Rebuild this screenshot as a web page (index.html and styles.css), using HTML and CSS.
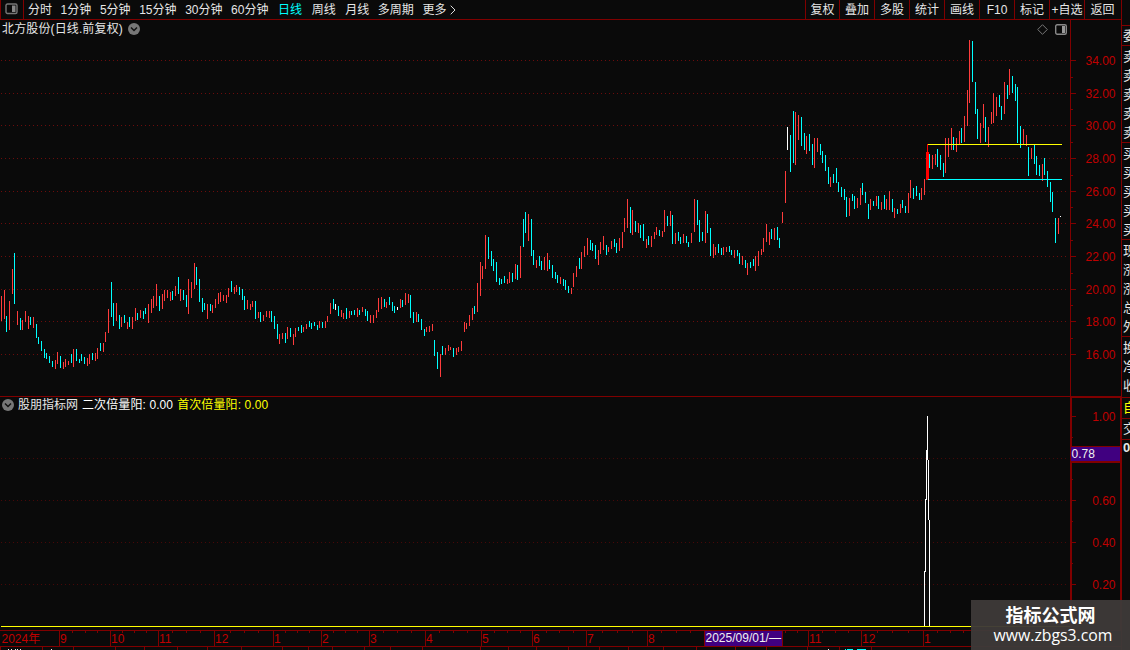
FILE: index.html
```html
<!DOCTYPE html>
<html lang="zh-CN">
<head>
  <meta charset="UTF-8">
  <title>北方股份</title>
  <link rel="stylesheet" href="styles.css">
</head>
<body>
  <div class="terminal">
    <div class="main">
      <div class="toolbar">
        <div class="layout-toggle">
          <svg width="13" height="12" viewBox="0 0 13 12"><rect x="1" y="1" width="11" height="9.5" rx="1.5" fill="none" stroke="#777" stroke-width="1.4"/><rect x="7" y="2.5" width="3.5" height="6.5" fill="#888"/></svg>
        </div>
        <div class="periods">
          <span>分时</span>
          <span>1分钟</span>
          <span>5分钟</span>
          <span>15分钟</span>
          <span>30分钟</span>
          <span>60分钟</span>
          <span class="spaced active">日线</span>
          <span class="spaced">周线</span>
          <span class="spaced">月线</span>
          <span>多周期</span>
          <span class="more">更多<svg width="6" height="10" viewBox="0 0 6 10"><path d="M.7 .7L5 5L.7 9.300" fill="none" stroke="#ddd"/></svg></span>
        </div>
        <div class="tools">
          <span>复权</span>
          <span>叠加</span>
          <span>多股</span>
          <span>统计</span>
          <span>画线</span>
          <span>F10</span>
          <span>标记</span>
          <span>+自选</span>
          <span>返回</span>
        </div>
      </div>

      <!-- Price chart -->
      <div class="panel price">
        <div class="panel-title">
          <span class="stock">北方股份(日线.前复权)</span>
          <svg width="12" height="12" viewBox="0 0 12 12"><circle cx="6" cy="6" r="6" fill="#777"/><path d="M3 4.500L6 7.500L9 4.500" fill="none" stroke="#111" stroke-width="1.500"/></svg>
        </div>
        <div class="panel-tools">
          <svg width="11" height="11" viewBox="0 0 11 11"><path d="M5.500 .7L10.300 5.500L5.500 10.300L.7 5.500Z" fill="none" stroke="#777"/></svg>
          <svg width="12" height="11" viewBox="0 0 12 11"><rect x=".7" y=".7" width="10.600" height="9.600" rx="1.500" fill="none" stroke="#888" stroke-width="1.400"/><rect x="7" y="2" width="3" height="7" fill="#999"/></svg>
        </div>
        <svg class="chart" width="1121" height="376" viewBox="0 20 1121 376">
          <path class="grid" d="M1 60.500H1068M1 93.500H1068M1 125.500H1068M1 158.500H1068M1 191.500H1068M1 223.500H1068M1 256.500H1068M1 289.500H1068M1 321.500H1068M1 354.500H1068"/>
          <g transform="translate(.5 0)">
            <path class="up" d="M1 296V321M4 290V319M9 301V330M12 269V294M17 311V325M22 320V330M25 311V322M28 316V329M33 317V328M55 360V369M57 352V364M63 362V369M65 359V367M68 361V365M73 349V367M87 358V366M89 354V364M95 353V361M97 348V359M103 343V352M105 332V342M108 309V333M116 303V321M121 317V327M127 322V329M132 317V329M135 308V321M140 310V318M148 304V323M151 299V313M153 296V308M156 284V306M162 294V309M164 290V301M167 290V298M170 292V301M175 286V296M180 289V301M188 279V314M191 282V298M194 263V289M207 304V319M212 305V313M215 299V308M218 293V304M220 292V302M223 295V301M226 295V303M228 288V297M234 287V294M236 285V292M247 300V309M250 304V310M252 301V307M258 312V318M263 315V321M266 311V317M269 311V318
            M279 334V344M282 333V339M287 327V339M293 334V345M295 328V337M303 327V332M306 324V329M319 321V328M325 321V328M327 316V322M330 303V314M341 310V317M343 313V319M349 311V318M357 308V317M362 307V312M370 315V323M373 315V323M376 310V318M378 298V312M381 297V309M386 302V308M400 299V308M405 293V305M408 294V303M416 312V322M426 327V332M429 326V332M432 324V331M440 354V377M445 348V355M448 345V351M450 347V350M456 348V355M458 347V352M461 341V351M464 322V332M466 323V329M469 315V326M472 308V320M477 283V312M480 262V296M482 266V279M485 235V269M507 279V284M509 272V283M515 264V279M520 246V278M528 214V241
            M536 260V268M544 257V270M547 253V271M560 277V284M571 288V294M573 273V287M576 266V277M581 252V269M584 246V257M587 238V255M598 250V265M600 242V254M603 236V250M608 247V252M611 241V249M619 238V251M622 232V248M624 218V232M627 199V228M632 210V235M638 223V233M646 239V248M651 236V247M654 232V239M656 227V235M662 231V237M664 210V232M670 211V226M675 233V244M683 234V243M691 233V243M694 199V232M705 211V243M713 244V258M715 247V255M723 247V255M726 247V252M734 250V258M742 256V265M747 263V275M755 256V271M758 251V266M761 249V255M763 238V252M766 224V242M769 232V245M774 228V240M782 212V223M785 171V203
            M795 112V165M798 115V140M806 136V154M814 138V168M817 138V152M830 177V187M849 198V216M857 198V208M860 188V205M870 199V210M876 196V206M881 202V210M886 199V210M889 191V210M894 208V218M900 204V213M908 193V213M910 180V198M921 188V200M924 179V195M932 155V169M935 154V165M945 138V173M948 138V157M951 128V150M956 138V152M959 131V144M964 116V142M967 90V126M969 40V103M980 123V143M983 104V128M988 127V147M991 112V124M993 93V123M996 97V116M1004 82V114M1009 69V95M1023 129V144M1026 135V146M1031 148V159M1042 164V181M1058 218V234"/>
            <path class="down" d="M6 316V332M14 253V304M20 318V330M30 317V325M36 324V338M38 337V344M41 341V351M44 349V358M46 353V359M49 356V363M52 361V367M60 356V368M71 354V363M76 349V361M79 359V363M81 354V361M84 357V364M92 353V360M100 343V351M111 282V317M113 303V326M119 315V329M124 315V323M129 317V327M137 313V320M143 311V319M145 308V314M159 296V311M172 291V300M178 277V294M183 290V300M186 295V307M196 267V285M199 279V302M202 298V312M204 303V310M210 304V311M231 281V292M239 287V295M242 289V300M244 296V310M255 301V319M260 312V322
            M271 311V322M274 316V329M277 324V339M285 333V343M290 328V337M298 327V331M301 325V333M309 321V327M311 323V329M314 322V326M317 325V330M322 322V328M333 299V309M338 306V316M346 308V319M351 311V315M354 310V315M359 310V315M365 309V316M367 311V321M384 299V307M389 297V305M392 302V311M394 306V313M402 300V307M410 295V318M413 312V323M418 314V322M421 319V330M424 329V336M434 340V356M437 352V369M442 346V355M453 348V357M474 306V314M488 237V259M491 251V266M493 259V271M496 262V282M499 278V285M501 279V284M504 276V283M512 273V282M517 265V280M523 219V247M525 212V233
            M531 219V256M533 250V265M539 256V266M541 261V270M549 260V269M552 265V278M555 272V279M557 275V283M563 279V286M565 280V290M568 286V293M579 258V269M590 240V250M592 243V251M595 245V259M606 245V255M614 239V247M616 243V253M630 207V233M635 221V232M640 225V238M643 224V241M648 236V245M659 230V236M667 216V226M672 215V244M678 232V241M680 237V244M686 236V243M688 242V247M697 200V225M699 220V242M702 232V241M707 214V233M710 228V256M718 244V253M721 248V255M729 246V252M731 250V255M737 250V256M739 253V264M745 260V268M750 262V268M753 259V266M771 229V239M777 227V240M779 238V248
            M790 135V172M793 111V163M801 117V146M804 133V150M809 134V151M812 144V165M820 144V155M822 151V163M825 155V171M828 167V184M833 174V183M836 168V183M838 182V192M841 187V197M844 189V200M846 197V217M852 194V201M854 196V209M862 183V195M865 192V203M868 204V219M873 201V206M878 196V209M884 195V209M892 199V212M897 209V214M902 200V208M905 206V213M913 188V199M916 186V196M919 193V200M929 154V168M937 149V167M940 155V170M943 163V177M953 137V150M961 128V143M972 41V82M975 82V114M977 109V139M985 117V142M999 95V107M1001 106V120M1007 85V99M1012 76V93M1015 84V101M1017 87V143M1020 126V148M1028 147V176M1034 145V164M1036 156V175M1039 165V176M1044 158V175M1047 171V187M1050 182V202M1052 192V212M1055 218V243"/>
            <path class="flat" d="M335 304V310M397 307V310M787 127V150M1060 216V217"/>
          </g>
          <!-- Signal bar with its high and low -->
          <path d="M927 144h1v8h1v28h-3v-28h1z" fill="#f00"/>
          <path d="M928 144.500H1062" stroke="#ff0"/>
          <path d="M928 179.500H1062" stroke="#0ff"/>
          <path class="frame" d="M1070.500 20V396M1071 60.500H1076M1071 93.500H1076M1071 125.500H1076M1071 158.500H1076M1071 191.500H1076M1071 223.500H1076M1071 256.500H1076M1071 289.500H1076M1071 321.500H1076M1071 354.500H1076M1071 77.500H1073M1071 109.500H1073M1071 142.500H1073M1071 175.500H1073M1071 207.500H1073M1071 240.500H1073M1071 273.500H1073M1071 305.500H1073M1071 338.500H1073"/>
          <g class="scale">
            <text x="1115.500" y="65">34.00</text>
            <text x="1115.500" y="98">32.00</text>
            <text x="1115.500" y="130">30.00</text>
            <text x="1115.500" y="163">28.00</text>
            <text x="1115.500" y="196">26.00</text>
            <text x="1115.500" y="228">24.00</text>
            <text x="1115.500" y="261">22.00</text>
            <text x="1115.500" y="294">20.00</text>
            <text x="1115.500" y="326">18.00</text>
            <text x="1115.500" y="359">16.00</text>
          </g>
        </svg>
      </div>

      <!-- Indicator chart -->
      <div class="panel indicator">
        <div class="panel-title">
          <svg width="12" height="12" viewBox="0 0 12 12"><circle cx="6" cy="6" r="6" fill="#777"/><path d="M3 4.500L6 7.500L9 4.500" fill="none" stroke="#111" stroke-width="1.500"/></svg>
          <span>股朋指标网</span>
          <span class="second">二次倍量阳: 0.00</span>
          <span class="first">首次倍量阳: 0.00</span>
        </div>
        <svg class="chart" width="1121" height="233" viewBox="0 397 1121 233">
          <path class="grid faint" d="M1 458.500H1068M1 500.500H1068M1 542.500H1068M1 584.500H1068"/>
          <path d="M1 626.500H1070" stroke="#ff0"/>
          <path d="M924.500 626V572L925.500 571V500L926.500 499V451L927.500 450V416V450L928.500 469V498L929.500 541V626" fill="none" stroke="#fff"/>
          <path d="M1070 397H1072V630H1070zM1070 397H1121V398H1070zM1120 397H1121V630H1120z" fill="#800000"/>
          <path class="frame" d="M1072 416.500H1076M1072 500.500H1076M1072 542.500H1076M1072 584.500H1076M1072 437.500H1073M1072 479.500H1073M1072 521.500H1073M1072 563.500H1073"/>
          <rect x="1071" y="446" width="50" height="17" fill="#800000"/>
          <rect x="1071" y="447" width="49" height="14" fill="#400080"/>
          <text class="cursor-label" x="1071.500" y="458">0.78</text>
          <g class="scale">
            <text x="1115.500" y="421">1.00</text>
            <text x="1115.500" y="505">0.60</text>
            <text x="1115.500" y="547">0.40</text>
            <text x="1115.500" y="589">0.20</text>
          </g>
        </svg>
      </div>

      <!-- Date axis -->
      <svg class="chart" width="1121" height="20" viewBox="0 630 1121 20">
        <path class="frame" d="M0 630.500H1121M0 646.500H1121M59.500 630V646M110.500 630V646M158.500 630V646M214.500 630V646M273.500 630V646M321.500 630V646M369.500 630V646M425.500 630V646M481.500 630V646M532.500 630V646M586.500 630V646M647.500 630V646M808.500 630V646M861.500 630V646M923.500 630V646"/>
        <path class="frame" d="M72.500 630v3M85.500 630v3M97.500 630v3M122.500 630v3M134.500 630v3M146.500 630v3M172.500 630v3M186.500 630v3M200.500 630v3M230.500 630v3M244.500 630v3M258.500 630v3M285.500 630v3M297.500 630v3M309.500 630v3M333.500 630v3M345.500 630v3M357.500 630v3M383.500 630v3M397.500 630v3M411.500 630v3M439.500 630v3M453.500 630v3M467.500 630v3M494.500 630v3M507.500 630v3M520.500 630v3M546.500 630v3M559.500 630v3M573.500 630v3M602.500 630v3M617.500 630v3M632.500 630v3M661.500 630v3M676.500 630v3M690.500 630v3M785.500 630v3M797.500 630v3M822.500 630v3M835.500 630v3M848.500 630v3M877.500 630v3M892.500 630v3M908.500 630v3M937.500 630v3M950.500 630v3M963.500 630v3"/>
        <path class="frame" d="M.5 647v3M42.500 647v3M73.500 647v3M115.500 647v3M144.500 647v3M177.500 647v3M207.500 647v3M241.500 647v3M282.500 647v3M308.500 647v3M332.500 647v3M364.500 647v3M390.500 647v3M422.500 647v3M480.500 647v3M508.500 647v3M536.500 647v3M568.500 647v3M599.500 647v3M628.500 647v3M663.500 647v3M696.500 647v3M735.500 647v3M766.500 647v3M807.500 647v3M839.500 647v3M871.500 647v3"/>
        <path d="M8 649.500h1M11 649.500h1M15 649.500h1M17 649.500h1M20 649.500h1M51 649.500h1M828 649.500h1" stroke="#eee"/>
        <path d="M845 649.500h1M847 649.500h6M857 649.500h9" stroke="#0ff"/>
        <rect x="704.500" y="630.500" width="78" height="16" fill="#400080" stroke="#800000"/>
        <g class="dates">
          <text x="1.500" y="643">2024年</text>
          <text x="60" y="643">9</text>
          <text x="111" y="643">10</text>
          <text x="159" y="643">11</text>
          <text x="215" y="643">12</text>
          <text x="274" y="643">1</text>
          <text x="322" y="643">2</text>
          <text x="370" y="643">3</text>
          <text x="426" y="643">4</text>
          <text x="482" y="643">5</text>
          <text x="533" y="643">6</text>
          <text x="587" y="643">7</text>
          <text x="648" y="643">8</text>
          <text x="809" y="643">11</text>
          <text x="862" y="643">12</text>
          <text x="924" y="643">1</text>
        </g>
        <text class="cursor-label" x="705.500" y="642">2025/09/01/—</text>
      </svg>
    </div>

    <!-- Quote column, cut off by the window edge -->
    <div class="quotes">
      <div class="group head"><span>委</span></div>
      <div class="group"><span>卖</span><span>卖</span><span>卖</span><span>卖</span><span>卖</span></div>
      <div class="group"><span>买</span><span>买</span><span>买</span><span>买</span><span>买</span></div>
      <div class="group"><span>现</span><span>涨</span><span>涨</span><span>总</span><span>外</span></div>
      <div class="group short"><span>换</span><span>净</span><span>收</span></div>
      <div class="group single own"><span>自</span></div>
      <div class="group single"><span>交</span></div>
      <div class="group last"><b>0</b></div>
    </div>

    <div class="watermark">
      <div class="site-name">指标公式网</div>
      <div class="site-url">www.zbgs3.com</div>
    </div>
  </div>
</body>
</html>
```

FILE: styles.css
```css
body {
  margin: 0;
  overflow: hidden;
  background-color: #0a0a0a;
  color: #e6e6e6;
  font: 12px/18px "Liberation Sans", "Noto Sans CJK SC", sans-serif;
}

.terminal {
  position: relative;
  display: flex;
  width: 1130px;
  height: 650px;
  overflow: hidden;
}

.main {
  width: 1121px;
  flex: none;
}

svg {
  display: block;
  flex: none;
}

/* Toolbar */
.toolbar {
  display: flex;
  box-sizing: border-box;
  height: 20px;
  border-bottom: 1px solid #800000;
  line-height: 20px;
  white-space: nowrap;
}

.layout-toggle {
  display: flex;
  box-sizing: border-box;
  width: 24px;
  padding: 3px 0 0 4px;
  border-left: 1px solid #800000;
  border-right: 1px solid #800000;
}

.periods {
  display: flex;
  flex: 1;
  gap: 8.6px;
  padding-left: 4px;
}

.spaced {
  padding-left: 1px;
}

.active {
  color: #00ffff;
}

.more {
  display: flex;
  align-items: center;
  gap: 4px;
  height: 19px;
}

.tools {
  display: grid;
  grid-template-columns: 34px repeat(7, 35px) 37px;
}

.tools span {
  height: 19px;
  border-left: 1px solid #800000;
  text-align: center;
}

.tools span:last-child {
  padding-right: 1px;
}

/* Chart panels */
.panel {
  position: relative;
}

.price {
  height: 376px;
  border-bottom: 1px solid #800000;
}

.panel-title {
  position: absolute;
  top: 0;
  left: 2px;
  display: flex;
  align-items: center;
  gap: 5px;
  line-height: 20px;
}

.price .panel-title {
  top: -1px;
}

.stock {
  letter-spacing: 0.13px;
}

.indicator .panel-title {
  gap: 4px;
  top: -2px;
}

.panel-tools {
  position: absolute;
  top: 4px;
  right: 54px;
  display: flex;
  gap: 7px;
}

.second {
  color: #fff;
  letter-spacing: 0.1px;
}

.first {
  color: #ffff00;
  letter-spacing: 0.1px;
}

.chart path {
  shape-rendering: crispEdges;
}

.up {
  stroke: #ff3c3c;
}

.down {
  stroke: #00ffff;
}

.flat {
  stroke: #ffffff;
}

.grid {
  stroke: #6c0c0c;
  stroke-dasharray: 1 3;
}

.faint {
  stroke: #480808;
}

.frame {
  stroke: #800000;
}

.scale {
  fill: #c00000;
  text-anchor: end;
}

.dates {
  fill: #c00000;
}

.cursor-label {
  fill: #f0f0f0;
}

/* Quote column */
.quotes {
  flex: none;
  box-sizing: border-box;
  width: 9px;
  padding-top: 25px;
  overflow: hidden;
  border-left: 1px solid #800000;
}

.group {
  box-sizing: border-box;
  height: 97px;
  padding: 1px 0 0 1px;
  border-top: 1px solid #800000;
}

.group span,
.group b {
  display: block;
  width: 14px;
  font-size: 13px;
  line-height: 19px;
}

.head {
  height: 20px;
  padding-top: 0;
}

.short {
  height: 61px;
}

.single {
  height: 21px;
  padding-top: 0;
}

.own {
  color: #ffff00;
}

.last {
  height: 212px;
  padding-top: 0;
  line-height: 17px;
}

.group.last b {
  line-height: 16px;
}

.watermark {
  position: absolute;
  right: 0;
  bottom: 0;
  box-sizing: border-box;
  width: 159px;
  height: 50px;
  padding-top: 3px;
  background-color: rgba(61, 57, 56, 0.96);
  color: #fff;
  text-align: center;
}

.site-name {
  font: bold 18px/22px "Noto Sans CJK SC", sans-serif;
}

.site-url {
  padding-left: 5px;
  font: 15.8px/21px "Open Sans", sans-serif;
}
```
